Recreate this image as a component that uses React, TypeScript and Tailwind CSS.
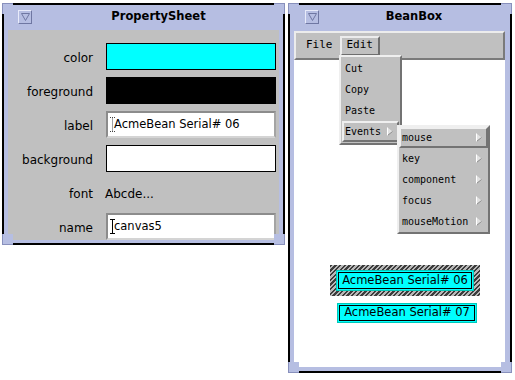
import React from "react";

const TitleButton = () => (
  <div className="w-[14px] h-[14px] shrink-0 flex items-center justify-center border border-t-[#e8ebfa] border-l-[#e8ebfa] border-b-[#6f77a2] border-r-[#6f77a2]">
    <svg width="9" height="8" viewBox="0 0 9 8">
      <path d="M0.5 0.5H8.5L4.5 7.5Z" fill="none" stroke="#6f77a2" />
    </svg>
  </div>
);

const Corners = () => (
  <>
    <div className="absolute -left-[2px] -top-[2px] w-[11px] h-[11px] bg-[#b6bee2] border-l border-t border-[#8890bc]" />
    <div className="absolute -right-[2px] -top-[2px] w-[11px] h-[11px] bg-[#b6bee2] border-r border-t border-[#8890bc]" />
    <div className="absolute -left-[2px] -bottom-[2px] w-[11px] h-[11px] bg-[#b6bee2] border-l border-b border-[#8890bc]" />
    <div className="absolute -right-[2px] -bottom-[2px] w-[11px] h-[11px] bg-[#b6bee2] border-r border-b border-[#8890bc]" />
  </>
);

const IBeam = ({ dotted }: { dotted?: boolean }) => (
  <svg width="5" height="15" viewBox="0 0 5 15" className="shrink-0">
    <path
      d="M0 0.5H5M2.5 0.5V14.5M0 14.5H5"
      stroke={dotted ? "#444" : "#000"}
      strokeDasharray={dotted ? "1 1" : undefined}
      fill="none"
    />
  </svg>
);

const Arrow = () => (
  <svg width="6" height="9" viewBox="0 0 6 9" className="shrink-0">
    <polygon points="0.5,0.5 5.5,4.5 0.5,8.5" fill="#e2e2e2" />
    <path d="M0.5 8.5L5.5 4.5" stroke="#8a8a8a" />
    <path d="M0.5 0.5V8.5" stroke="#ffffff" />
  </svg>
);

const Row = ({ label, children }: { label: string; children: React.ReactNode }) => (
  <div className="flex items-center h-[27px]">
    <div className="w-[85px] text-right pt-[3px] text-[12px] text-black">{label}</div>
    <div className="ml-[13px] w-[170px] h-full flex">{children}</div>
  </div>
);

const TextField = ({ value, dotted }: { value: string; dotted?: boolean }) => (
  <div className="w-full h-full bg-white flex items-center border-2 border-t-[#8c8c8c] border-l-[#8c8c8c] border-r-[#a4a4a4] border-b-[#d4d4d4] pl-[2px]">
    <IBeam dotted={dotted} />
    <span className="text-[11.5px] text-black -ml-[1px] whitespace-nowrap">{value}</span>
  </div>
);

const MenuItem = ({ label, active, arrow }: { label: string; active?: boolean; arrow?: boolean }) => (
  <div
    className={
      active
        ? "h-[21px] flex items-center justify-between pl-[1px] pr-[4px] border-2 border-t-[#efefef] border-l-[#efefef] border-b-[#737373] border-r-[#737373]"
        : "h-[21px] flex items-center justify-between pl-[1px] pr-[4px] border-2 border-transparent"
    }
  >
    <span>{label}</span>
    {arrow && <Arrow />}
  </div>
);

const Bean = ({ label }: { label: string }) => (
  <div className="w-full h-full bg-[#00ffff] border border-[#00c8b8] p-[1px] flex">
    <div className="flex-1 border border-black flex items-center justify-center text-[11.5px] text-black whitespace-nowrap">
      {label}
    </div>
  </div>
);

export default function App() {
  return (
    <div className="relative w-[515px] h-[380px] bg-white overflow-hidden font-['DejaVu_Sans',sans-serif]">
      {/* PropertySheet window */}
      <div className="absolute left-[2px] top-[3px] w-[283px] h-[242px] border-2 border-black bg-[#b6bee2] flex flex-col px-[4px] pb-[3px]">
        <div className="h-[24px] flex items-center">
          <div className="ml-[10px]">
            <TitleButton />
          </div>
          <div className="flex-1 text-center pl-[6px] font-bold text-[11.5px] text-black">PropertySheet</div>
        </div>
        <div className="flex-1 mt-[1px] bg-[#c0c0c0] flex flex-col pt-[13px] gap-[7px]">
          <Row label="color">
            <div className="w-full h-full bg-[#00ffff] border border-black" />
          </Row>
          <Row label="foreground">
            <div className="w-full h-full bg-black border border-black" />
          </Row>
          <Row label="label">
            <TextField value="AcmeBean Serial# 06" dotted />
          </Row>
          <Row label="background">
            <div className="w-full h-full bg-white border border-black" />
          </Row>
          <Row label="font">
            <div className="flex items-center pt-[2px] -ml-[1px] text-[12px] text-black">Abcde...</div>
          </Row>
          <Row label="name">
            <TextField value="canvas5" />
          </Row>
        </div>
        <Corners />
      </div>

      {/* BeanBox window */}
      <div className="absolute left-[288px] top-[3px] w-[224px] h-[370px] border-2 border-black bg-[#b6bee2] flex flex-col pl-[4px] pr-[5px] pb-[4px]">
        <div className="h-[24px] flex items-center">
          <div className="ml-[11px]">
            <TitleButton />
          </div>
          <div className="flex-1 text-center pl-[4px] font-bold text-[11.5px] text-black">BeanBox</div>
        </div>
        <div className="flex-1 mt-[2px] bg-white flex flex-col">
          <div className="h-[29px] bg-[#c0c0c0] border-2 border-t-[#ececec] border-l-[#ececec] border-b-[#7a7a7a] border-r-[#7a7a7a] flex items-center pl-[4px] font-['DejaVu_Sans_Mono',monospace] text-[11px] text-black">
            <div className="h-[20px] flex items-center px-[4px] border-2 border-transparent">File</div>
            <div className="h-[20px] flex items-center px-[5px] ml-[1px] border-2 border-t-[#ececec] border-l-[#ececec] border-b-[#6e6e6e] border-r-[#6e6e6e]">
              Edit
            </div>
          </div>
          <div className="flex-1" />
        </div>
        <Corners />
      </div>

      {/* Beans on the canvas */}
      <div className="absolute left-[330px] top-[265px] w-[150px] h-[31px] px-[6px] py-[5px] bg-[repeating-linear-gradient(135deg,#3c3c3c_0px,#3c3c3c_1.7px,#b8b8b8_1.7px,#b8b8b8_3.3px)]">
        <Bean label="AcmeBean Serial# 06" />
      </div>
      <div className="absolute left-[337px] top-[303px] w-[140px] h-[20px]">
        <Bean label="AcmeBean Serial# 07" />
      </div>

      {/* Edit menu */}
      <div className="absolute left-[339px] top-[55px] w-[63px] h-[90px] bg-[#c0c0c0] border-2 border-t-[#efefef] border-l-[#efefef] border-b-[#737373] border-r-[#737373] py-[1px] px-[1px] font-['DejaVu_Sans_Mono',monospace] text-[10px] text-black">
        <MenuItem label="Cut" />
        <MenuItem label="Copy" />
        <MenuItem label="Paste" />
        <MenuItem label="Events" active arrow />
      </div>

      {/* Events submenu */}
      <div className="absolute left-[397px] top-[125px] w-[93px] h-[109px] bg-[#c0c0c0] border-2 border-t-[#efefef] border-l-[#efefef] border-b-[#737373] border-r-[#737373] font-['DejaVu_Sans_Mono',monospace] text-[10px] text-black">
        <MenuItem label="mouse" active arrow />
        <MenuItem label="key" arrow />
        <MenuItem label="component" arrow />
        <MenuItem label="focus" arrow />
        <MenuItem label="mouseMotion" arrow />
      </div>
    </div>
  );
}
